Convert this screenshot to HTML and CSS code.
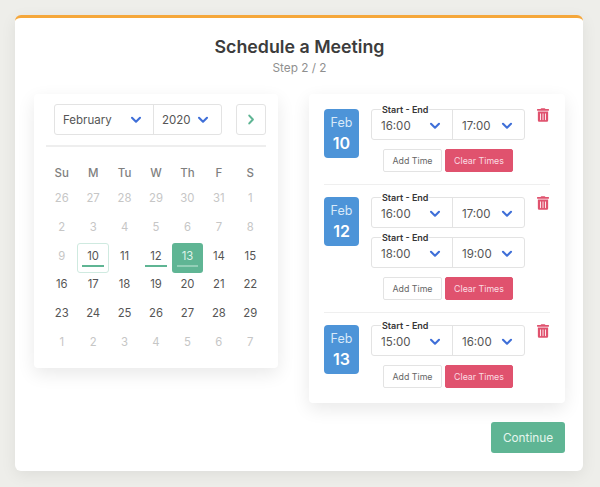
FILE: index.html
```html
<!DOCTYPE html>
<html lang="en">
<head>
    <meta charset="UTF-8">
    <title>Schedule a Meeting</title>
    <link rel="stylesheet" href="styles.css">
</head>
<body>
    <svg class="icon-defs" width="0" height="0">
        <symbol id="chev" viewBox="0 0 14 10"><path d="M2 2.2 7 7.2 12 2.2" fill="none" stroke="currentColor" stroke-width="2.6" stroke-linecap="round" stroke-linejoin="round"/></symbol>
        <symbol id="trash" viewBox="0 0 448 512"><path d="M32 464a48 48 0 0 0 48 48h288a48 48 0 0 0 48-48V128H32zm272-256a16 16 0 0 1 32 0v224a16 16 0 0 1-32 0zm-96 0a16 16 0 0 1 32 0v224a16 16 0 0 1-32 0zm-96 0a16 16 0 0 1 32 0v224a16 16 0 0 1-32 0zM432 32H312l-9.4-18.7A24 24 0 0 0 281.1 0H166.8a23.72 23.72 0 0 0-21.4 13.3L136 32H16A16 16 0 0 0 0 48v32a16 16 0 0 0 16 16h416a16 16 0 0 0 16-16V48a16 16 0 0 0-16-16z" fill="currentColor"/></symbol>
    </svg>

    <div class="modal">
        <h1>Schedule a Meeting</h1>
        <p class="step">Step 2 / 2</p>

        <div class="columns">
            <div class="panel calendar">
                <div class="cal-head">
                    <div class="select-group month-year">
                        <div class="select month">February <svg class="chev"><use href="#chev"/></svg></div>
                        <div class="select year">2020 <svg class="chev"><use href="#chev"/></svg></div>
                    </div>
                    <button class="next"><svg class="chev-next" viewBox="0 0 10 14"><path d="M2.8 2 7.4 7 2.8 12" fill="none" stroke="currentColor" stroke-width="2.6" stroke-linecap="round" stroke-linejoin="round"/></svg></button>
                </div>
                <div class="cal-divider"></div>
                <div class="weekdays">
                    <span>Su</span><span>M</span><span>Tu</span><span>W</span><span>Th</span><span>F</span><span>S</span>
                </div>
                <div class="days">
                    <span class="day off">26</span><span class="day off">27</span><span class="day off">28</span><span class="day off">29</span><span class="day off">30</span><span class="day off">31</span><span class="day off">1</span>
                    <span class="day off">2</span><span class="day off">3</span><span class="day off">4</span><span class="day off">5</span><span class="day off">6</span><span class="day off">7</span><span class="day off">8</span>
                    <span class="day off">9</span><span class="day today marked">10</span><span class="day">11</span><span class="day marked">12</span><span class="day selected marked">13</span><span class="day">14</span><span class="day">15</span>
                    <span class="day">16</span><span class="day">17</span><span class="day">18</span><span class="day">19</span><span class="day">20</span><span class="day">21</span><span class="day">22</span>
                    <span class="day">23</span><span class="day">24</span><span class="day">25</span><span class="day">26</span><span class="day">27</span><span class="day">28</span><span class="day">29</span>
                    <span class="day off">1</span><span class="day off">2</span><span class="day off">3</span><span class="day off">4</span><span class="day off">5</span><span class="day off">6</span><span class="day off">7</span>
                </div>
            </div>

            <div class="right">
                <div class="panel times">
                    <div class="date-row">
                        <div class="date-badge"><span class="badge-month">Feb</span><span class="badge-day">10</span></div>
                        <div class="slots">
                            <div class="select-group time-range">
                                <span class="range-label">Start - End</span>
                                <div class="select start">16:00 <svg class="chev"><use href="#chev"/></svg></div>
                                <div class="select end">17:00 <svg class="chev"><use href="#chev"/></svg></div>
                            </div>
                            <div class="slot-actions">
                                <button class="btn-add">Add Time</button>
                                <button class="btn-clear">Clear Times</button>
                            </div>
                        </div>
                        <svg class="trash"><use href="#trash"/></svg>
                    </div>

                    <div class="date-row">
                        <div class="date-badge"><span class="badge-month">Feb</span><span class="badge-day">12</span></div>
                        <div class="slots">
                            <div class="select-group time-range">
                                <span class="range-label">Start - End</span>
                                <div class="select start">16:00 <svg class="chev"><use href="#chev"/></svg></div>
                                <div class="select end">17:00 <svg class="chev"><use href="#chev"/></svg></div>
                            </div>
                            <div class="select-group time-range">
                                <span class="range-label">Start - End</span>
                                <div class="select start">18:00 <svg class="chev"><use href="#chev"/></svg></div>
                                <div class="select end">19:00 <svg class="chev"><use href="#chev"/></svg></div>
                            </div>
                            <div class="slot-actions">
                                <button class="btn-add">Add Time</button>
                                <button class="btn-clear">Clear Times</button>
                            </div>
                        </div>
                        <svg class="trash"><use href="#trash"/></svg>
                    </div>

                    <div class="date-row">
                        <div class="date-badge"><span class="badge-month">Feb</span><span class="badge-day">13</span></div>
                        <div class="slots">
                            <div class="select-group time-range">
                                <span class="range-label">Start - End</span>
                                <div class="select start">15:00 <svg class="chev"><use href="#chev"/></svg></div>
                                <div class="select end">16:00 <svg class="chev"><use href="#chev"/></svg></div>
                            </div>
                            <div class="slot-actions">
                                <button class="btn-add">Add Time</button>
                                <button class="btn-clear">Clear Times</button>
                            </div>
                        </div>
                        <svg class="trash"><use href="#trash"/></svg>
                    </div>
                </div>
                <button class="btn-continue">Continue</button>
            </div>
        </div>
    </div>
</body>
</html>
```

FILE: styles.css
```css
* {
    box-sizing: border-box;
}
body {
    margin: 0;
    height: 487px;
    padding: 15px 17px 16px 15px;
    background-color: #eeeeea;
    font-family: Inter, "Liberation Sans", sans-serif;
    color: #4a4a4a;
    overflow: hidden;
}
.icon-defs {
    position: absolute;
}
button {
    font-family: inherit;
    cursor: pointer;
}
.modal {
    height: 456px;
    background-color: #fff;
    border-top: 3px solid #f5a73b;
    border-radius: 6px;
    box-shadow: 0 4px 16px rgba(0, 0, 0, 0.07);
    padding: 18px 18px 0 19px;
}
h1 {
    margin: 0;
    font-size: 17.8px;
    line-height: 22px;
    font-weight: 600;
    color: #3c3c3c;
    text-align: center;
}
.step {
    margin: 3px 0 0;
    font-size: 11.8px;
    line-height: 15px;
    color: #8f8f8f;
    text-align: center;
}
.columns {
    display: flex;
    justify-content: space-between;
    align-items: flex-start;
    margin-top: 18px;
}
.panel {
    background-color: #fff;
    border-radius: 4px;
    box-shadow: 0 6px 18px rgba(0, 0, 0, 0.09);
}

/* calendar */
.calendar {
    width: 244px;
    height: 274px;
    padding: 10px 12px 0;
}
.cal-head {
    display: flex;
    justify-content: space-between;
    padding-left: 8px;
}
.select-group {
    display: flex;
    height: 31px;
    border: 1px solid #e3e3e3;
    border-radius: 3px;
}
.month-year {
    width: 168px;
}
.select {
    display: flex;
    align-items: center;
    justify-content: space-between;
    font-size: 11.5px;
    color: #555;
    padding: 0 8px;
}
.select + .select {
    border-left: 1px solid #e3e3e3;
}
.month {
    width: 98px;
    padding-right: 11px;
}
.year {
    flex: 1;
    padding-right: 12px;
}
.chev {
    width: 12px;
    height: 8px;
    color: #3f6fd8;
    flex-shrink: 0;
}
.next {
    width: 30px;
    height: 31px;
    padding: 0;
    background-color: #fff;
    border: 1px solid #e3e3e3;
    border-radius: 3px;
    color: #5fb594;
    display: flex;
    align-items: center;
    justify-content: center;
}
.chev-next {
    width: 8px;
    height: 11px;
}
.cal-divider {
    height: 2px;
    margin-top: 10px;
    background-color: #eeeeee;
}
.weekdays,
.days {
    display: grid;
    grid-template-columns: repeat(7, 1fr);
    text-align: center;
}
.weekdays {
    margin-top: 18px;
    font-size: 11.5px;
    line-height: 16px;
    font-weight: 500;
    color: #7f7f7f;
}
.days {
    margin-top: 4px;
    grid-auto-rows: 28.8px;
    font-size: 11.3px;
}
.day {
    position: relative;
    line-height: 26px;
    color: #555;
}
.day.off {
    color: #c6c6c6;
}
.day.today {
    height: 30px;
    border: 1px solid #cfeae0;
    border-radius: 3px;
    line-height: 24px;
}
.day.selected {
    height: 30px;
    background-color: #5fb594;
    border-radius: 3px;
    color: #dff3ea;
}
.day.marked::after {
    content: "";
    position: absolute;
    left: 5px;
    right: 5px;
    top: 22px;
    height: 2px;
    background-color: #5fb594;
}
.day.today::after {
    top: 21px;
    left: 4px;
    right: 4px;
}
.day.selected::after {
    background-color: #93cfb7;
}

/* selected dates */
.right {
    width: 256px;
}
.times {
    height: 309px;
    padding: 15px 15px 0;
}
.date-row {
    display: flex;
    align-items: flex-start;
    padding-bottom: 12px;
    margin-bottom: 12px;
    border-bottom: 1px solid #efefef;
}
.date-row:last-child {
    border-bottom: 0;
}
.date-badge {
    width: 35px;
    height: 49px;
    flex-shrink: 0;
    display: flex;
    flex-direction: column;
    align-items: center;
    background-color: #4d94d8;
    border-radius: 4px;
    color: #fff;
}
.badge-month {
    margin-top: 7px;
    font-size: 12.5px;
    line-height: 14px;
    color: #d8e9f8;
}
.badge-day {
    margin-top: 4px;
    font-size: 16px;
    line-height: 18px;
    font-weight: 600;
}
.slots {
    width: 154px;
    margin-left: 12px;
}
.time-range {
    position: relative;
    margin-bottom: 9px;
}
.range-label {
    position: absolute;
    left: 9px;
    top: -6px;
    padding: 0 1px;
    background-color: #fff;
    font-size: 9px;
    line-height: 11px;
    font-weight: 600;
    color: #363636;
}
.start {
    width: 80px;
}
.end {
    flex: 1;
}
.start,
.end {
    padding: 3px 11px 0 9px;
}
.slot-actions {
    display: flex;
    justify-content: center;
    gap: 3px;
}
.slot-actions button {
    height: 23px;
    padding: 0;
    font-size: 8.8px;
    border-radius: 2px;
}
.btn-add {
    width: 59px;
    background-color: #fff;
    border: 1px solid #e3e3e3;
    color: #666;
}
.btn-clear {
    width: 68px;
    background-color: #e0526e;
    border: 1px solid #e0526e;
    color: #fbdbe2;
}
.trash {
    width: 12px;
    height: 14px;
    margin: -1px 0 0 12px;
    color: #e0526e;
    flex-shrink: 0;
}
.btn-continue {
    display: block;
    width: 74px;
    height: 31px;
    margin: 19px 0 0 auto;
    padding: 0;
    background-color: #5fb594;
    border: 0;
    border-radius: 3px;
    font-size: 11.8px;
    color: #e6f5ee;
}
```
